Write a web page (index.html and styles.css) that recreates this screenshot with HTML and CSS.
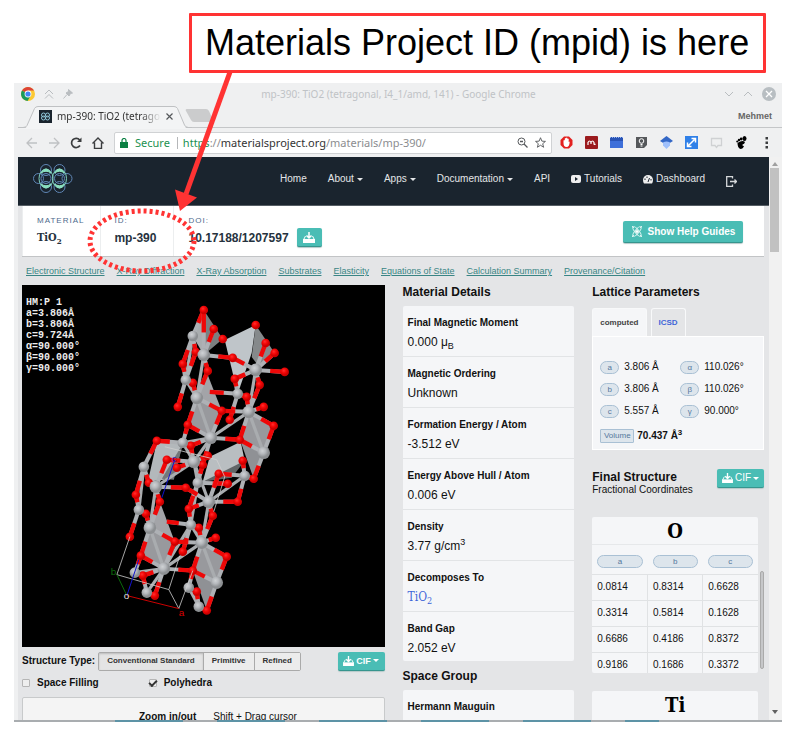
FILE: index.html
```html
<!DOCTYPE html>
<html lang="en">
<head>
<meta charset="utf-8">
<title>Materials Project ID</title>
<link rel="stylesheet" href="styles.css">
</head>
<body>
<svg class="defs" width="0" height="0" aria-hidden="true">
  <defs>
    <symbol id="download" viewBox="0 0 12 11"><path d="M6 0v5M3.500 3.500 6 6 8.500 3.500" fill="none" stroke="#fff" stroke-width="1.500"/><path d="M.700 7.500 2.500 4M11.300 7.500 9.500 4" stroke="#fff"/><path d="M0 7h12v4H0z" fill="#fff"/></symbol>
  </defs>
</svg>
<figure class="figure">
  <figcaption class="callout">Materials Project ID (mpid) is here</figcaption>
  <div class="window">
    <div class="titlebar">
      <svg width="14" height="14" viewBox="0 0 14 14"><circle cx="7" cy="7" r="7" fill="#fcc934"/><path d="M7 7 1 3.500A7 7 0 0 1 13 3.500H7z" fill="#dc4437"/><path d="M1 3.500A7 7 0 0 0 6.500 14L9.500 9 7 7z" fill="#1a9a5a"/><circle cx="7" cy="7" r="3.400" fill="#fff"/><circle cx="7" cy="7" r="2.600" fill="#4285f4"/></svg>
      <svg width="10" height="10" viewBox="0 0 10 10" class="faint"><path d="M1 5 5 1l4 4M1 9.500l4-4 4 4"/></svg>
      <svg width="10" height="10" viewBox="0 0 10 10"><path d="M5.500.500 9.500 4 7.500 4.500 6 7 3 4 5.500 2.500zM4 5.500.500 9.500" fill="#b9bdc0" stroke="#b9bdc0"/></svg>
      <span class="window-title">mp-390: TiO2 (tetragonal, I4_1/amd, 141) - Google Chrome</span>
      <svg width="10" height="10" viewBox="0 0 10 10" class="faint"><path d="M1 3l4 4 4-4"/></svg>
      <svg width="10" height="10" viewBox="0 0 10 10" class="faint"><path d="M1 7l4-4 4 4"/></svg>
      <svg width="14" height="14" viewBox="0 0 14 14"><circle cx="7" cy="7" r="7" fill="#b8bec2"/><path d="M4 4l6 6M10 4l-6 6" stroke="#fff" stroke-width="1.300"/></svg>
    </div>
    <div class="tabstrip">
      <div class="tab">
        <svg class="tab-shape" width="174" height="24" viewBox="0 0 174 24"><path d="M0 23.500h5q3 0 4-2l7.500-18Q17.500 1.500 20 1.500H156q2.500 0 3.500 2l7 17.500q1 2.500 4 2.500h3.500V24H0z" fill="#f3f4f5"/><path d="M0 22.500h5q3 0 4-2l7.500-17Q17.500 1.500 20 1.500H156q2.500 0 3.500 2l7 16.500q1 2.500 4 2.500h3.500" fill="none" stroke="#bfc1c3"/></svg>
        <svg class="tab-icon" width="13" height="13" viewBox="0 0 13 13"><path d="M0 0h13v13H0z" fill="#1a242e"/><g fill="none" stroke="#8fc5d8"><circle cx="4.500" cy="5" r="2"/><circle cx="4.500" cy="8" r="2"/><circle cx="8.500" cy="5" r="2"/><circle cx="8.500" cy="8" r="2"/></g></svg>
        <span class="tab-title">mp-390: TiO2 (tetragonal</span>
        <svg class="tab-close" width="7" height="7" viewBox="0 0 7 7"><path d="M.500.500l6 6M6.500.500l-6 6" stroke="#55585b" stroke-width="1.200"/></svg>
      </div>
      <svg class="new-tab" width="28" height="16" viewBox="0 0 28 16"><path d="M2 1h19q2 0 3 2l4 9q1 2-1 2H9q-2 0-3-2L1 3q-1-2 1-2z" fill="#cbcccd"/></svg>
      <span class="profile">Mehmet</span>
    </div>
    <div class="toolbar">
      <svg width="12" height="12" viewBox="0 0 12 12" fill="none" stroke="#bfc1c3" stroke-width="1.300"><path d="M11 6H1M6 1 1 6l5 5"/></svg>
      <svg width="12" height="12" viewBox="0 0 12 12" fill="none" stroke="#bfc1c3" stroke-width="1.300"><path d="M1 6h10M6 1l5 5-5 5"/></svg>
      <svg width="12" height="12" viewBox="0 0 12 12" fill="none" stroke="#3b3d3f" stroke-width="1.700"><path d="M10 8.500A4.600 4.600 0 1 1 9.700 3"/><path d="M11.500.500V5H7z" fill="#3b3d3f" stroke="none"/></svg>
      <svg width="12" height="12" viewBox="0 0 12 12" fill="none" stroke="#3b3d3f" stroke-width="1.400"><path d="M.500 6.500 6 1l5.500 5.500M2.500 5.500v6h7v-6"/></svg>
      <div class="omnibox">
        <svg width="8" height="10" viewBox="0 0 8 10"><path d="M0 4h8v6H0z" fill="#0b8043"/><path d="M2 4V2.500a2 2 0 0 1 4 0V4" fill="none" stroke="#0b8043" stroke-width="1.200"/></svg>
        <span class="secure">Secure</span>
        <span class="url"><span class="scheme">https</span>://<span class="host">materialsproject.org</span>/materials/mp-390/</span>
        <svg width="11" height="11" viewBox="0 0 11 11" fill="none" stroke="#55585b"><circle cx="4.500" cy="4.500" r="3.500"/><path d="M7 7l3.500 3.500M3 4.500h3" stroke-width="1.300"/></svg>
        <svg width="11" height="11" viewBox="0 0 12 12" fill="none" stroke="#55585b"><path d="M6 .800 7.500 4.500l3.900.300-3 2.500 1 3.900L6 9 2.600 11.200l1-3.900-3-2.500 3.900-.300z"/></svg>
      </div>
      <div class="extensions">
        <svg width="13" height="13" viewBox="0 0 13 13"><path d="M4 .500h5L12.500 4v5L9 12.500H4L.500 9V4z" fill="#e3201f"/><path d="M3.500 7V4.500q.700-1 1.300 0v-2q.700-1 1.300 0V2q.700-1 1.300 0v1q.600-.800 1.300 0v3l1-.500Q9.500 11 6.500 11T3.500 7z" fill="#fff"/></svg>
        <svg width="13" height="13" viewBox="0 0 13 13"><rect width="13" height="13" rx="1" fill="#9b1b1e"/><path d="M3 9V6.500q1.500-3 3 0V8M6 6.500q1.500-3 3 0V8q0 1 1.500 0" fill="none" stroke="#fff" stroke-width="1.200"/></svg>
        <svg width="13" height="13" viewBox="0 0 13 13"><path d="M0 2h13v10H0z" fill="#3d6fd9"/><path d="M0 1h13v4H0z" fill="#2853b5"/><path d="M0 1.500h13" stroke="#98b4ec" stroke-dasharray="1 1"/></svg>
        <svg width="13" height="13" viewBox="0 0 13 13"><path d="M1 1h11v8l-3 3H1z" fill="#55585b"/><circle cx="6.500" cy="5" r="2.300" fill="none" stroke="#fff"/><path d="M5.500 8.500h2M5.500 10h2" stroke="#fff"/></svg>
        <svg width="13" height="13" viewBox="0 0 13 13"><path d="M6.500 0 13 5 6.500 9 0 5z" fill="#3367c6"/><path d="M3 6.500q3.500-2 7 0v3L6.500 13 3 9.500z" fill="#9fc0fb"/></svg>
        <svg width="13" height="13" viewBox="0 0 13 13"><path d="M0 0h13v13H0z" fill="#2f80e8"/><path d="M3.500 9.500l6-6M6.500 2.500h4v4M2.500 6.500v4h4" fill="none" stroke="#fff" stroke-width="1.500"/></svg>
        <svg width="13" height="13" viewBox="0 0 13 13"><path d="M1.500 2.500h10v7H8l-1.500 2-1.500-2H1.500z" fill="none" stroke="#cfd1d3" stroke-width="1.300"/></svg>
        <svg width="13" height="13" viewBox="0 0 13 13"><path d="M2.500 7q5-3.500 7.500-1Q9.500 8 7.500 8.500q-.500 1.500 1.500 1.500Q8 13 5.500 13 2.500 12 2.500 7z"/><ellipse cx="9.500" cy="2.500" rx="2" ry="2.500"/><circle cx="6.200" cy="3" r="1.400"/><circle cx="4" cy="4" r="1.200"/><circle cx="2.300" cy="5.500" r="1.100"/></svg>
        <svg width="13" height="13" viewBox="0 0 13 13" fill="#3b3d3f"><path d="M5.500 1h2.500v2.500H5.500zM5.500 5.500h2.500v2.500H5.500zM5.500 10h2.500v2.500H5.500z"/></svg>
      </div>
    </div>
    <div class="viewport">
      <div class="page">
        <nav class="nav">
          <svg class="logo" width="40" height="30" viewBox="0 0 40 30" fill="none"><g stroke="#5f86b5"><circle cx="13" cy="6" r="5.500"/><circle cx="26.500" cy="6" r="5.500"/><circle cx="13" cy="23" r="5.500"/><circle cx="26.500" cy="23" r="5.500"/><circle cx="5.500" cy="14.500" r="5"/><circle cx="34" cy="14.500" r="5"/><circle cx="13" cy="14.500" r="5"/><circle cx="26.500" cy="14.500" r="5"/></g><g stroke="#7fcfc0"><ellipse cx="13" cy="14.500" rx="7" ry="9.500"/><ellipse cx="26.500" cy="14.500" rx="7" ry="9.500"/></g><path d="M8 9q5-8 10 0-5-3.500-10 0zM21.500 9q5-8 10 0-5-3.500-10 0zM8 20q5 8 10 0-5 3.500-10 0zM21.500 20q5 8 10 0-5 3.500-10 0z" fill="#8be0bf" stroke="#8be0bf"/></svg>
          <a href="#">Home</a>
          <a href="#" class="has-caret">About</a>
          <a href="#" class="has-caret">Apps</a>
          <a href="#" class="has-caret">Documentation</a>
          <a href="#">API</a>
          <a href="#"><svg width="10" height="8" viewBox="0 0 10 8"><rect width="10" height="8" rx="2" fill="#eee"/><path d="M4 2l3 2-3 2z" fill="#1a242e"/></svg>Tutorials</a>
          <a href="#"><svg width="10" height="9" viewBox="0 0 10 9"><path d="M0 5a5 5 0 0 1 10 0q0 2-1 3.500H1Q0 7 0 5z" fill="#eee"/><path d="M5 7 6.500 3M2 3.500v1.500M4 1.500v1.500M8 4v1.500" stroke="#1a242e"/></svg>Dashboard</a>
          <a href="#" aria-label="Sign out" class="exit"><svg width="11" height="11" viewBox="0 0 11 11" fill="none" stroke="#d5d8da" stroke-width="1.300"><path d="M6.500 2.500V.700H.700v9.600h5.800V8.500M4 5.500h6.500M8.500 3.500l2 2-2 2"/></svg></a>
        </nav>
        <div class="body">
          <header class="material">
            <div class="fact"><span class="fact-label">MATERIAL</span><span class="fact-value slab">TiO<sub>2</sub></span></div>
            <div class="fact"><span class="fact-label">ID:</span><span class="fact-value">mp-390</span></div>
            <div class="fact"><span class="fact-label">DOI:</span><span class="fact-value">10.17188/1207597</span></div>
            <button class="teal doi" aria-label="Download citation"><svg width="12" height="11"><use href="#download"/></svg></button>
            <button class="teal help"><svg width="12" height="14" viewBox="0 0 12 14" fill="none" stroke="#d8f3f0"><circle cx="6" cy="6.500" r="1.500" fill="#fff"/><ellipse cx="6" cy="6.500" rx="2" ry="6" transform="rotate(40 6 6.500)"/><ellipse cx="6" cy="6.500" rx="2" ry="6" transform="rotate(-40 6 6.500)"/><path d="M1 1l2 2M11 1 9 3M1 12l2-2M11 12l-2-2"/></svg>Show Help Guides</button>
          </header>
          <div class="links">
            <a href="#">Electronic Structure</a><a href="#">X-Ray Diffraction</a><a href="#">X-Ray Absorption</a><a href="#">Substrates</a><a href="#">Elasticity</a><a href="#">Equations of State</a><a href="#">Calculation Summary</a><a href="#">Provenance/Citation</a>
          </div>
          <div class="columns">
            <section>
              <div class="viewer">
                <svg id="structure" viewBox="22 285 363 362" role="img" aria-label="Crystal structure of TiO2"></svg>
                <div class="cell-info">HM:P 1<br>a=3.806Å<br>b=3.806Å<br>c=9.724Å<br>α=90.000°<br>β=90.000°<br>γ=90.000°</div>
              </div>
              <div class="structure-type">
                <b>Structure Type:</b>
                <div class="segments"><button class="active">Conventional Standard</button><button>Primitive</button><button>Refined</button></div>
                <button class="teal cif bold"><svg width="11" height="10"><use href="#download"/></svg>CIF</button>
              </div>
              <div class="options">
                <label><input type="checkbox">Space Filling</label>
                <label><input type="checkbox" checked>Polyhedra</label>
              </div>
              <div class="controls"><b>Zoom in/out</b><span>Shift + Drag cursor</span></div>
            </section>
            <section>
              <h2>Material Details</h2>
              <dl class="details">
                <div><dt>Final Magnetic Moment</dt><dd>0.000 μ<sub>B</sub></dd></div>
                <div><dt>Magnetic Ordering</dt><dd>Unknown</dd></div>
                <div><dt>Formation Energy / Atom</dt><dd>-3.512 eV</dd></div>
                <div><dt>Energy Above Hull / Atom</dt><dd>0.006 eV</dd></div>
                <div><dt>Density</dt><dd>3.77 g/cm<sup>3</sup></dd></div>
                <div><dt>Decomposes To</dt><dd><a href="#" class="slab">TiO<sub>2</sub></a></dd></div>
                <div><dt>Band Gap</dt><dd>2.052 eV</dd></div>
              </dl>
              <h2 class="next">Space Group</h2>
              <dl class="details"><div><dt>Hermann Mauguin</dt></div></dl>
            </section>
            <section>
              <h2>Lattice Parameters</h2>
              <div class="lattice-tabs"><button class="active">computed</button><button>ICSD</button></div>
              <div class="lattice">
                <div class="params">
                  <i>a</i><span>3.806 Å</span><i>α</i><span>110.026°</span>
                  <i>b</i><span>3.806 Å</span><i>β</i><span>110.026°</span>
                  <i>c</i><span>5.557 Å</span><i>γ</i><span>90.000°</span>
                </div>
                <div class="volume"><i>Volume</i><b>70.437 Å<sup>3</sup></b></div>
              </div>
              <div class="final">
                <div><h2>Final Structure</h2><p>Fractional Coordinates</p></div>
                <button class="teal cif"><svg width="11" height="10"><use href="#download"/></svg>CIF</button>
              </div>
              <div class="sites">
                <div class="site">
                  <table>
                    <caption class="slab">O</caption>
                    <thead><tr><th><i>a</i></th><th><i>b</i></th><th><i>c</i></th></tr></thead>
                    <tbody>
                      <tr><td>0.0814</td><td>0.8314</td><td>0.6628</td></tr>
                      <tr><td>0.3314</td><td>0.5814</td><td>0.1628</td></tr>
                      <tr><td>0.6686</td><td>0.4186</td><td>0.8372</td></tr>
                      <tr><td>0.9186</td><td>0.1686</td><td>0.3372</td></tr>
                    </tbody>
                  </table>
                </div>
                <div class="site-thumb"></div>
              </div>
              <div class="site second"><h3 class="slab">Ti</h3></div>
            </section>
          </div>
        </div>
      </div>
      <div class="scrollbar"><span class="up"></span><span class="thumb"></span><span class="down"></span></div>
    </div>
    <div class="window-edge"></div>
  </div>
  <svg class="annotation" width="800" height="300" viewBox="0 0 800 300" fill="none" stroke="#f33" aria-hidden="true">
    <ellipse cx="142" cy="241" rx="52" ry="30" stroke-width="5" stroke-dasharray="3 3"/>
    <path d="M230 72 186 194" stroke-width="5"/>
    <path d="M180 211 175 189.500 197 197.500z" fill="#f33" stroke="none"/>
  </svg>
</figure>
<script src="structure.js"></script>
</body>
</html>
```

FILE: structure.js
```js
// Titanium sites: x, y, radius
const ti = [[193,336,5],[204,355,6],[186,380,5],[197,398,6],[256,370,6],[238,394,5],[249,412,6],[211,438,6],[183,443,5],[264,453,6],[194,462,6],[144,467,5],[156,487,6],[198,483,5],[245,476,5],[209,502,6],[139,510,5],[150,528,6],[191,525,5],[202,543,6],[135,573,5],[164,569,6],[147,593,5],[217,583,6],[189,588,5],[199,607,5]];
// Oxygen sites: x, y
const ox = [[204,310],[214,329],[223,339],[256,325],[266,343],[275,353],[285,372],[233,358],[196,352],[183,364],[208,371],[193,383],[235,379],[260,385],[178,407],[247,397],[264,407],[222,411],[230,420],[188,425],[274,426],[240,440],[157,441],[191,446],[167,460],[203,465],[208,456],[219,474],[243,461],[254,479],[228,484],[177,468],[149,483],[186,488],[136,495],[160,502],[146,514],[238,502],[189,509],[213,516],[199,528],[130,537],[175,542],[216,538],[183,552],[141,556],[227,557],[193,571],[143,576],[155,596],[197,592],[207,611]];
// Bonds as [titanium, oxygen, oxygen, ...]
const tiO = [[0,0,8,9],[1,1,7,8,10,0],[2,9,8,14,11],[3,10,11,17,19],[4,4,6,7,12,13,5],[5,12,15,18],[6,13,15,16,17,20,21],[7,17,19,21,25,23],[8,22,19,23],[9,20,21,29],[10,23,25,24,31,26],[11,22,32,34],[12,24,32,35,33],[13,25,30,38],[14,27,28,29,37],[15,27,33,37,38,39],[16,34,41,36],[17,35,36,42,45],[18,38,40,44],[19,39,40,42,43,46,47],[20,48,45],[21,42,45,47,48,49],[22,48,49],[23,46,47,51],[24,47,50],[25,50,51]];
const tiTi = [[0,2],[1,3],[2,3],[4,6],[6,7],[3,7],[8,10],[10,12],[10,15],[10,7],[13,18],[15,14],[15,19],[12,17],[11,16],[17,21],[19,21],[19,23],[21,22],[24,25],[6,9],[10,13],[18,19],[18,21],[7,8],[20,21]];
const stubs = [[238,394,210,392],[191,525,167,522]];
const faces = [
  ['204,310 193,336 204,355 210,345', '#a9adaf'], ['204,310 223,339 204,355', '#7b7f80'],
  ['256,325 225,340 238,394 252,353', '#bfc5c9'], ['256,325 275,353 260,368 252,357', '#85898b'],
  ['208,375 197,398 222,411', '#a3a4a8'], ['197,398 222,411 211,438 188,425', '#98999d'],
  ['249,412 274,426 264,453 240,440', '#98999d'], ['157,442 183,444 178,462 164,480 148,482', '#b3b8bb'],
  ['183,444 174,480 162,479', '#73777a'], ['241,442 245,461 220,477 203,482 210,457', '#b9bec1'],
  ['245,461 232,478 203,482', '#626567'], ['241,442 264,453 254,479', '#8f9195'],
  ['160,502 150,528 175,542', '#a3a4a8'], ['150,528 175,542 164,569 141,556', '#98999d'],
  ['202,543 227,557 217,583 193,571', '#98999d'], ['193,571 217,583 207,611', '#8f9195']
];
const out = [];
const line = (x1, y1, x2, y2, color, w) =>
  out.push(`<path d="M${x1} ${y1} ${x2} ${y2}" stroke="${color}" stroke-width="${w}"/>`);

faces.forEach(([p, c]) => out.push(`<polygon points="${p}" fill="${c}"/>`));
tiTi.forEach(([a, b]) => line(ti[a][0], ti[a][1], ti[b][0], ti[b][1], '#a9acaf', 3.2));
const half = (x1, y1, x2, y2) => {
  line(x1, y1, x2, y2, '#aeb1b5', 4);
  line((x1 + x2) / 2, (y1 + y2) / 2, x2, y2, '#ee0808', 4.4);
};
tiO.forEach(([t, ...os]) => os.forEach(o => half(ti[t][0], ti[t][1], ox[o][0], ox[o][1])));
stubs.forEach(s => half(...s));
ox.forEach(([x, y]) => out.push(`<circle cx="${x}" cy="${y}" r="4.3" fill="url(#oxygen)"/>`));
ti.forEach(([x, y, r]) => out.push(`<circle cx="${x}" cy="${y}" r="${r + 0.3}" fill="url(#titanium)"/>`));

// Unit cell outline and axes
out.push('<path d="M130 537 117 575 169 590 179 609M169 590 180 556M179 609 193 571M165 447 217 460 225 477 214 512" fill="none" stroke="#cfcfcf" stroke-width=".8"/>');
line(127, 596, 179, 609, '#c00', 1);
line(127, 596, 117, 575, '#0a6a0a', 1);
line(127, 596, 139, 560, '#11c', 1);
line(162, 498, 175, 460, '#11c', 1);
out.push('<text x="179" y="616" fill="#d00">a</text><text x="111" y="575" fill="#0a6a0a">b</text><text x="172" y="462" fill="#22c">c</text><text x="124" y="599" fill="#ddd">o</text>');

document.getElementById('structure').innerHTML = `
  <defs>
    <radialGradient id="oxygen" cx=".4" cy=".35"><stop offset="0" stop-color="#ff3030"/><stop offset=".5" stop-color="#f60808"/><stop offset="1" stop-color="#cc0000"/></radialGradient>
    <radialGradient id="titanium" cx=".4" cy=".35"><stop offset="0" stop-color="#cfd2d5"/><stop offset=".5" stop-color="#b6b9bd"/><stop offset="1" stop-color="#8c8f92"/></radialGradient>
  </defs>` + out.join('');
```

FILE: styles.css
```css
* { box-sizing: border-box; }
body { margin: 0; background: #fff; font-family: "Liberation Sans", sans-serif; font-size: 10px; line-height: 12px; color: #111; }
h2, h3, p, dl, dd, figure { margin: 0; }
button { font: inherit; border: 0; padding: 0; margin: 0; }
i { font-style: normal; }
sub, sup { font-size: 9px; line-height: 0; }
svg { flex: none; display: block; }
.defs { position: absolute; }
.slab { font-family: "DejaVu Serif Condensed", "DejaVu Serif", serif; }

.figure { position: relative; height: 100vh; padding: 13px 18px 17px 14px; display: flex; flex-direction: column; }
.callout { margin: 0 16px 10px 175px; border: 3px solid #f33; border-radius: 1px; font-size: 36px; line-height: 54px; padding-left: 13px; color: #000; white-space: nowrap; }
.annotation { position: absolute; left: 0; top: 0; pointer-events: none; }

.window { flex: 1; min-height: 0; display: flex; flex-direction: column; background: #eff0f1; }
.window-edge { height: 2px; background: repeating-linear-gradient(90deg, #a9adb0 0 101px, #5d93a6 101px 102px); background: repeating-linear-gradient(90deg, #a9adb0 0 34px, #5d93a6 34px 102px) 67px 0 / 578px 2px no-repeat #a9adb0; }
.titlebar { height: 22px; display: flex; align-items: center; gap: 9px; padding: 0 6px 0 7px; }
.faint { fill: none; stroke: #b9bdc0; }
.window-title { flex: 1; text-align: center; font: 10px/14px "Noto Sans", sans-serif; color: #bfc3c6; }
.tabstrip { height: 23px; margin-left: 4px; display: flex; align-items: center; border-bottom: 1px solid #c4c6c8; }
.tab { position: relative; width: 167px; height: 23px; padding: 0 12px 0 21px; display: flex; align-items: center; gap: 5px; }
.tab-shape { position: absolute; left: 0; top: 0; }
.tab-icon, .tab-title, .tab-close { position: relative; }
.tab-title { flex: 1; min-width: 0; overflow: hidden; white-space: nowrap; font: 10px/14px "Noto Sans", sans-serif; color: #333; -webkit-mask-image: linear-gradient(90deg, #000 80%, transparent); mask-image: linear-gradient(90deg, #000 80%, transparent); }
.profile { margin-left: auto; margin-right: 10px; font-size: 9px; font-weight: bold; color: #666; }
.toolbar { height: 29px; padding: 0 9px 0 12px; display: flex; align-items: center; gap: 10px; }
.omnibox { flex: 1; height: 22px; display: flex; align-items: center; gap: 7px; padding: 0 5px; background: #fff; border: 1px solid #d0d2d4; border-radius: 2px; font: 11px/16px "Noto Sans", sans-serif; }
.secure { color: #1b9150; padding-right: 7px; border-right: 1px solid #b5b7b9; line-height: 12px; }
.url { flex: 1; color: #8b8d8f; white-space: nowrap; margin-left: -2px; }
.scheme { color: #1b9150; }
.host { color: #333; }
.extensions { display: flex; gap: 12px; margin-left: -2px; }

.viewport { flex: 1; min-height: 0; display: flex; overflow: hidden; margin-left: 4px; }
.page { flex: 1; min-width: 0; background: #e4e5e7; overflow: hidden; }
.scrollbar { width: 13px; background: #f1f1f1; display: flex; flex-direction: column; align-items: center; padding: 5px 2px 6px 0; }
.up { border: 3px solid transparent; border-top: 0; border-bottom: 4px solid #a0a0a0; }
.thumb { width: 9px; height: 84px; margin-top: 2px; background: #c1c1c1; }
.down { margin-top: auto; border: 3px solid transparent; border-bottom: 0; border-top: 4px solid #606060; }

.nav { height: 49px; background: #1a242e; border-bottom: 1px solid #555d64; display: flex; align-items: center; gap: 21px; padding: 0 32px 4px 15px; }
.nav a { color: #e4e6e8; text-decoration: none; display: flex; align-items: center; gap: 3px; }
.logo { margin-right: auto; }
.nav .exit { padding-top: 5px; }
.has-caret::after, .cif::after { content: ""; border: 3px solid transparent; border-top-color: currentColor; border-bottom: 0; }

.body { padding: 0 5px 0 4px; }
.material { height: 51px; background: #fff; border-bottom: 1px solid #c2c4c6; display: flex; align-items: stretch; }
.fact { padding: 9px 16px 0 14px; border-left: 1px solid #eceeef; display: flex; flex-direction: column; }
.fact:nth-child(2) { padding-right: 17px; padding-left: 13px; }
.fact:last-of-type { padding-right: 8px; }
.fact-label { font-size: 8px; line-height: 12px; letter-spacing: 1px; color: #4d6a8c; }
.fact-value { font-size: 12px; line-height: 20px; margin-top: 1px; font-weight: bold; color: #26323e; }
.fact-value.slab { font-size: 11px; }
.fact-value sub { font-size: 8px; }
.teal { background: #4abdb5; color: #fff; border-radius: 2px; border-bottom: 1px solid #36958e; display: flex; align-items: center; justify-content: center; box-shadow: 0 1px 1px #b5c9c9; }
.doi { width: 25px; height: 19px; margin-top: 22px; }
.help { margin: 15px 21px 0 auto; width: 120px; height: 22px; gap: 5px; font-weight: bold; }
.links { display: flex; gap: 12px; padding: 8px 4px 0; font-size: 9px; line-height: 12px; white-space: nowrap; }
.links a { color: #398585; }
.columns { display: grid; grid-template-columns: minmax(0, 19fr) minmax(0, 9fr) minmax(0, 9fr); gap: 18px; margin-top: 8px; }

.viewer { position: relative; background: #000; }
.viewer > svg { width: 100%; height: auto; }
.viewer text { font: 10px "Liberation Sans", sans-serif; }
.cell-info { position: absolute; left: 4px; top: 12px; color: #eee; font: bold 10px/11px "Liberation Mono", monospace; }
.structure-type { display: flex; align-items: center; gap: 3px; margin-top: 5px; }
.segments { display: flex; border: 1px solid #aaa; border-radius: 2px; font-size: 8px; font-weight: bold; }
.segments button { height: 17px; padding: 0 8px; background: #ececec; color: #333; white-space: nowrap; }
.segments button + button { border-left: 1px solid #aaa; }
.segments .active { background: #e4e4e4; box-shadow: inset 0 1px 2px #bbb; }
.cif { width: 47px; height: 19px; gap: 2px; margin-left: auto; }
.bold { font-weight: bold; font-size: 9px; }
.options { display: flex; gap: 50px; margin-top: 6px; font-weight: bold; }
.options label { display: flex; align-items: center; gap: 7px; }
.options input { appearance: none; width: 8px; height: 8px; margin: 0; border: 1px solid #b5b5b5; border-radius: 1px; background: #eee; display: grid; place-content: center; }
.options input:checked::after { content: ""; width: 6px; height: 3px; border: solid #333; border-width: 0 0 2px 2px; rotate: -45deg; }
.controls { display: flex; gap: 17px; margin-top: 8px; padding: 13px 0 30px 116px; border: 1px solid #c8cacb; background: #f4f4f4; border-radius: 2px; }

h2 { font-size: 12px; line-height: 14px; color: #111; }
.details { margin-top: 7px; background: #f5f6f8; border-radius: 2px; }
.details > div { height: 51px; padding: 11px 5px 0; border-bottom: 1px solid #e2e4e6; }
.details > div:last-child { height: 49px; border: 0; }
dt { font-weight: bold; line-height: 12px; }
dd { font-size: 12px; line-height: 16px; margin-top: 5px; }
dd a { color: #4166d8; text-decoration: none; }
.next { margin-top: 8px; }

.lattice-tabs { display: flex; gap: 4px; margin-top: 9px; font-size: 8px; font-weight: bold; }
.lattice-tabs button { height: 28px; padding: 0 7px; border: 1px solid #f8f9fa; border-bottom: 0; border-radius: 3px 3px 0 0; background: #e4e5e7; color: #4166d8; }
.lattice-tabs .active { background: #f5f6f8; color: #444; }
.lattice { background: #f5f6f8; border: 1px solid #fff; padding: 24px 7px 6px; }
.params { display: grid; grid-template-columns: 19px 51px 19px 1fr; column-gap: 5px; row-gap: 9px; }
.params i, th i, .volume i { display: block; border: 1px solid #a9c0d4; background: #dde5ec; color: #55789c; border-radius: 7px; text-align: center; font-size: 8px; font-weight: normal; line-height: 11px; height: 13px; }
.volume { display: flex; align-items: center; gap: 3px; margin-top: 11px; }
.volume i { width: 34px; height: 14px; line-height: 12px; border-radius: 1px; }
.volume sup { font-size: 8px; }
.final { display: flex; margin-top: 19px; height: 48px; }
.final h2 { margin-top: 1px; }
.sites { display: flex; gap: 2px; height: 156px; align-items: flex-end; }
.site { flex: 1; height: 156px; overflow: hidden; background: #f5f6f8; border-radius: 2px; }
.site-thumb { width: 4px; height: 98px; margin-bottom: 4px; border-radius: 2px; background: #c6c7c9; border: 1px solid #aaa; }
table { width: 100%; border-collapse: collapse; table-layout: fixed; }
caption, h3 { font-size: 20px; line-height: 28px; height: 28px; font-weight: bold; text-align: center; color: #000; }
caption { border-bottom: 1px solid #e6e8ea; }
th { height: 29px; padding: 4px 5px 0; }
td { height: 26px; padding: 0 5px; border-top: 1px solid #e0e2e4; border-left: 1px solid #e0e2e4; }
td:first-child { border-left: 0; }
.second { margin: 18px 6px 0 0; }
```
